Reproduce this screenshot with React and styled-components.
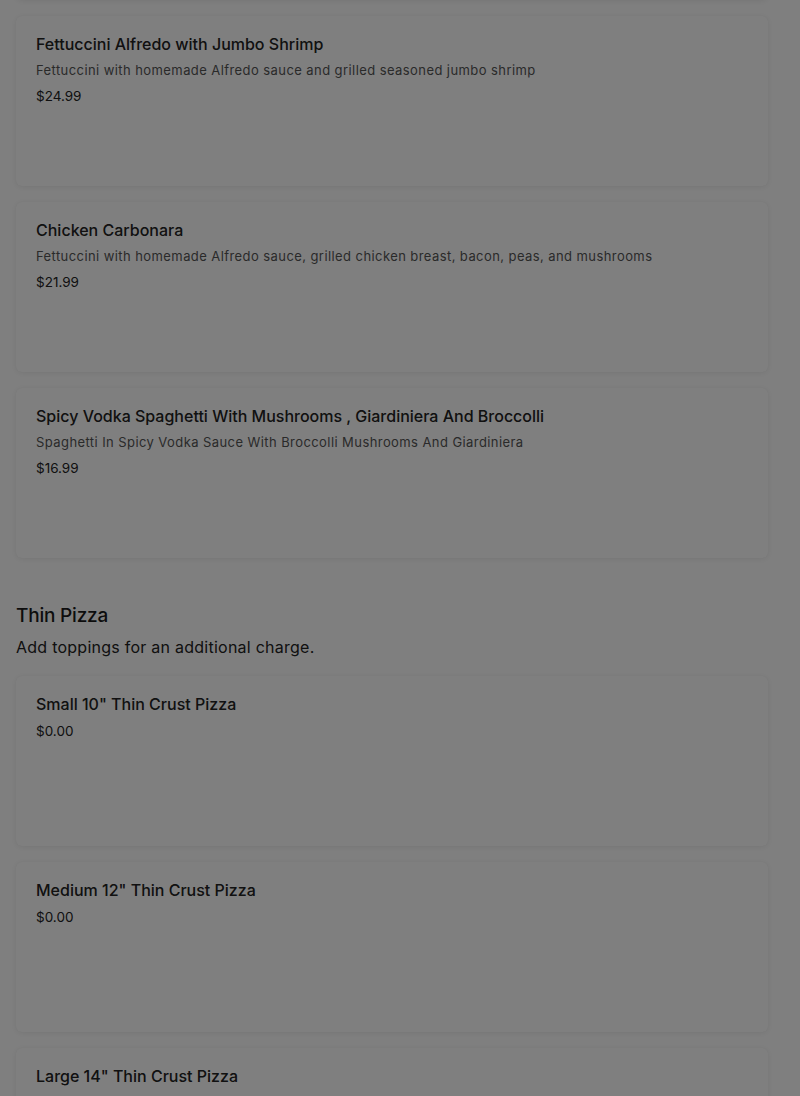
import React from "react";
import styled, { createGlobalStyle } from "styled-components";

const Global = createGlobalStyle`
  html, body { margin: 0; padding: 0; background: #ffffff; }
  body { font-family: "Inter", "Lato", "Liberation Sans", sans-serif; color: #111; }
`;

const Page = styled.div`
  width: 800px;
  box-sizing: border-box;
  padding: 0 32px 40px 16px;
  overflow: hidden;
`;

const Scroller = styled.div`
  margin-top: -170px;
`;

const Section = styled.section`
  display: flex;
  flex-direction: column;
  gap: 16px;
  & + & { margin-top: 45px; }
`;

const SectionHead = styled.div`
  display: flex;
  flex-direction: column;
  gap: 7px;
  margin-bottom: 2px;
`;

const SectionTitle = styled.h2`
  margin: 0;
  font-size: 19px;
  line-height: 26px;
  font-weight: 500;
  letter-spacing: -0.2px;
  color: #1a1a1a;
`;

const SectionNote = styled.p`
  margin: 0;
  font-size: 16px;
  line-height: 22px;
  letter-spacing: 0.25px;
  color: #222;
`;

const Card = styled.div`
  box-sizing: border-box;
  height: 170px;
  padding: 18px 20px;
  background: #fff;
  border-radius: 6px;
  box-shadow: 0 1px 6px rgba(0, 0, 0, 0.08), 0 0 1px rgba(0,0,0,0.06);
  display: flex;
  flex-direction: column;
  gap: 7px;
`;

const ItemName = styled.div`
  font-size: 16px;
  line-height: 20px;
  font-weight: 500;
  color: #222;
`;

const ItemDesc = styled.div`
  font-size: 13px;
  line-height: 18px;
  letter-spacing: 0.42px;
  color: #555;
`;

const Price = styled.div`
  margin-top: 1px;
  font-size: 13.5px;
  line-height: 18px;
  color: #222;
`;

const Overlay = styled.div`
  position: fixed;
  inset: 0;
  background: rgba(0, 0, 0, 0.5);
`;

const pasta = [
  { name: "Fettuccini Alfredo with Jumbo Shrimp", desc: "Fettuccini with homemade Alfredo sauce and grilled seasoned jumbo shrimp", price: "$24.99" },
  { name: "Chicken Carbonara", desc: "Fettuccini with homemade Alfredo sauce, grilled chicken breast, bacon, peas, and mushrooms", price: "$21.99" },
  { name: "Spicy Vodka Spaghetti With Mushrooms , Giardiniera And Broccolli", desc: "Spaghetti In Spicy Vodka Sauce With Broccolli Mushrooms And Giardiniera", price: "$16.99" },
];

const pizza = [
  { name: 'Small 10" Thin Crust Pizza', price: "$0.00" },
  { name: 'Medium 12" Thin Crust Pizza', price: "$0.00" },
  { name: 'Large 14" Thin Crust Pizza', price: "$0.00" },
];

function Item({ name, desc, price }) {
  return (
    <Card>
      <ItemName>{name}</ItemName>
      {desc && <ItemDesc>{desc}</ItemDesc>}
      <Price>{price}</Price>
    </Card>
  );
}

export default function App() {
  return (
    <>
      <Global />
      <Page>
        <Scroller>
          <Section>
            <Card aria-hidden="true" />
            {pasta.map((p) => <Item key={p.name} {...p} />)}
          </Section>
          <Section>
            <SectionHead>
              <SectionTitle>Thin Pizza</SectionTitle>
              <SectionNote>Add toppings for an additional charge.</SectionNote>
            </SectionHead>
            {pizza.map((p) => <Item key={p.name} {...p} />)}
          </Section>
        </Scroller>
      </Page>
      <Overlay />
    </>
  );
}
